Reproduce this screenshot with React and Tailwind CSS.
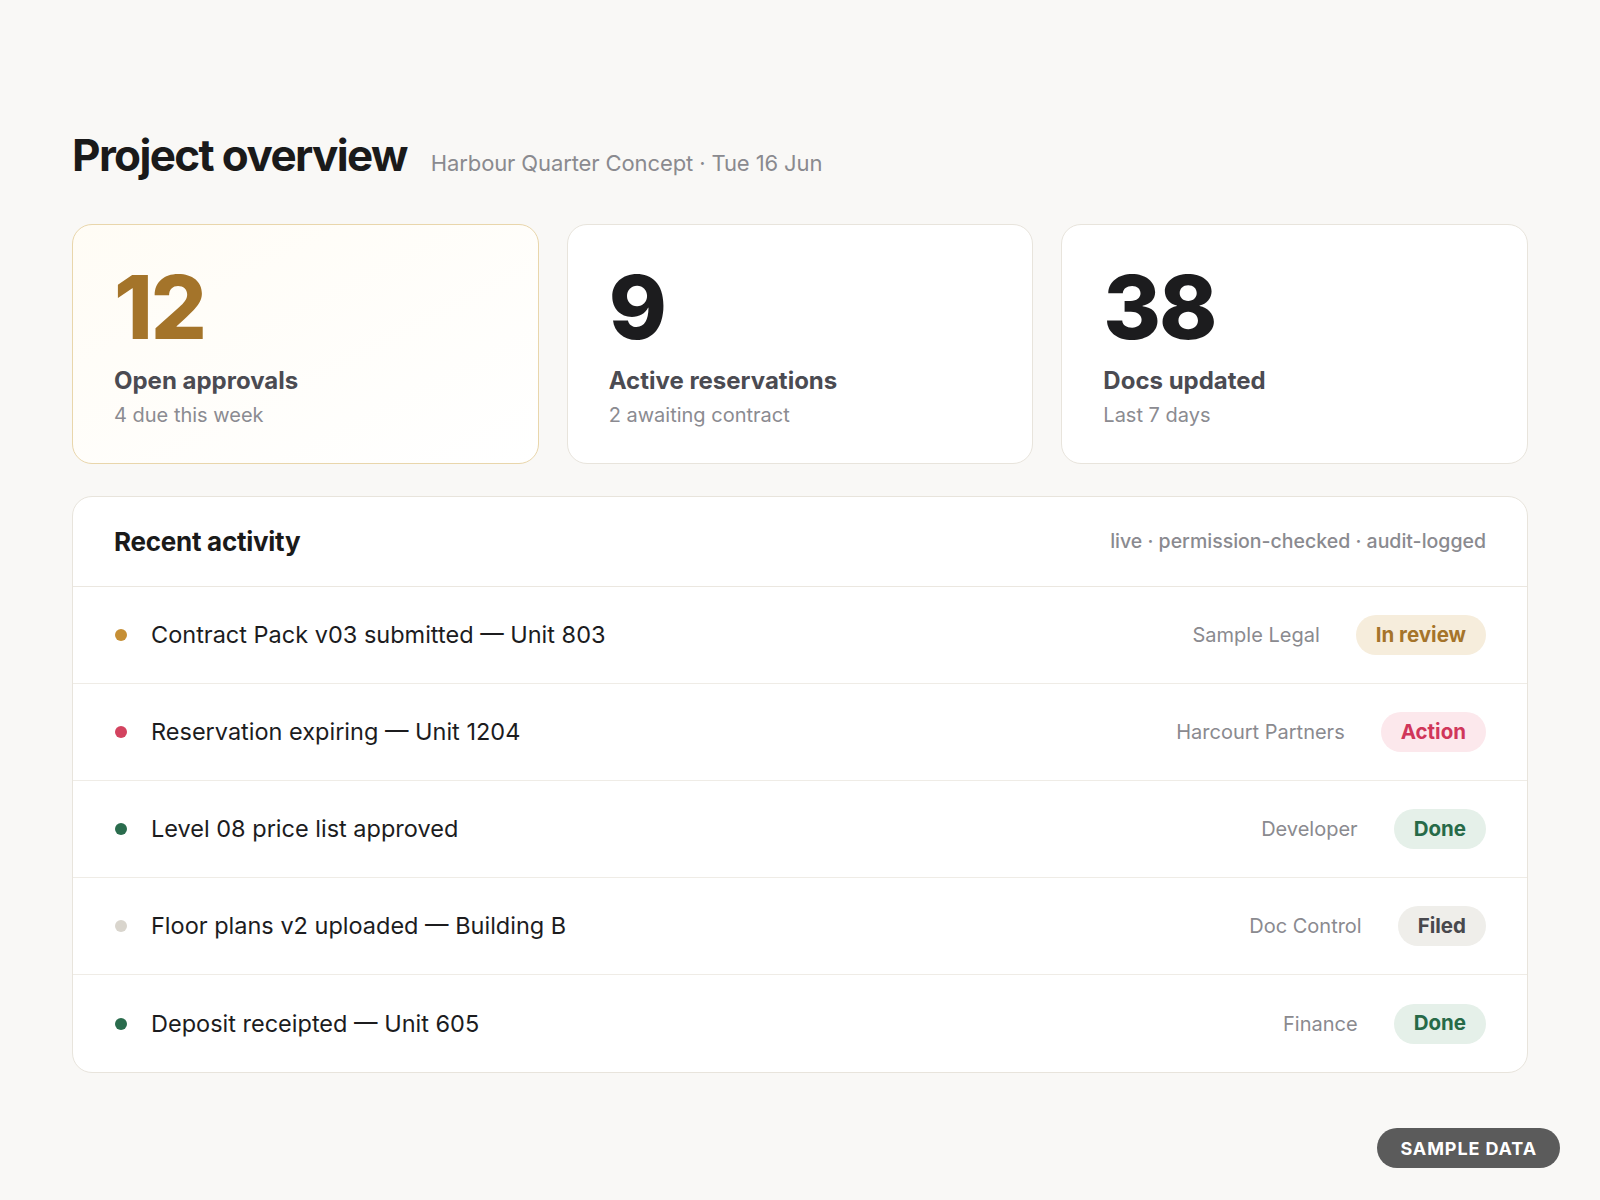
import React from "react";

const STATS = [
  {
    value: "12",
    label: "Open approvals",
    sub: "4 due this week",
    card: "border-[#e9d6ab] bg-gradient-to-br from-[#fffcf5] to-white",
    num: "text-[#a4742a]",
  },
  {
    value: "9",
    label: "Active reservations",
    sub: "2 awaiting contract",
    card: "border-[#e8e4dc] bg-white",
    num: "text-[#1c1c1e]",
  },
  {
    value: "38",
    label: "Docs updated",
    sub: "Last 7 days",
    card: "border-[#e8e4dc] bg-white",
    num: "text-[#1c1c1e]",
  },
];

const BADGES = {
  review: { text: "In review", cls: "bg-[#f6eddc] text-[#a5742a]" },
  action: { text: "Action", cls: "bg-[#fce8ec] text-[#d0365a]" },
  done: { text: "Done", cls: "bg-[#e5f0e9] text-[#276a48]" },
  filed: { text: "Filed", cls: "bg-[#efeeea] text-[#48484d]" },
};

const ACTIVITY = [
  {
    dot: "bg-[#c68f35]",
    title: "Contract Pack v03 submitted — Unit 803",
    who: "Sample Legal",
    badge: "review",
  },
  {
    dot: "bg-[#d3435f]",
    title: "Reservation expiring — Unit 1204",
    who: "Harcourt Partners",
    badge: "action",
  },
  {
    dot: "bg-[#2a6c4d]",
    title: "Level 08 price list approved",
    who: "Developer",
    badge: "done",
  },
  {
    dot: "bg-[#d9d5cd]",
    title: "Floor plans v2 uploaded — Building B",
    who: "Doc Control",
    badge: "filed",
  },
  {
    dot: "bg-[#2a6c4d]",
    title: "Deposit receipted — Unit 605",
    who: "Finance",
    badge: "done",
  },
];

export default function App() {
  return (
    <div className="min-h-screen bg-[#f9f8f6] px-[72px] pt-[133px] pb-[128px] font-['Inter',sans-serif]">
      {/* Header */}
      <div className="flex items-baseline gap-6">
        <h1 className="text-[44px] font-bold leading-none tracking-[-0.037em] text-[#1a1a1a]">
          Project overview
        </h1>
        <p className="text-[22px] leading-none tracking-[-0.005em] text-[#8a8a8f]">
          Harbour Quarter Concept · Tue 16 Jun
        </p>
      </div>

      {/* Stats */}
      <div className="mt-[47px] grid grid-cols-3 gap-7">
        {STATS.map((s, i) => (
          <div
            key={i}
            className={`h-[240px] rounded-[20px] border px-[41px] pt-[38px] ${s.card}`}
          >
            <div
              className={`text-[88px] font-extrabold leading-none tracking-tight ${s.num}`}
            >
              {s.value}
            </div>
            <div className="mt-3.5 text-[24px] font-bold leading-8 text-[#4b4b52]">
              {s.label}
            </div>
            <div className="mt-1 text-[20px] leading-7 text-[#8b8b91]">
              {s.sub}
            </div>
          </div>
        ))}
      </div>

      {/* Recent activity */}
      <div className="mt-8 overflow-hidden rounded-[20px] border border-[#e8e4dc] bg-white">
        <div className="flex h-[90px] items-center justify-between border-b border-[#ebe7e0] px-[41px]">
          <h2 className="text-[26px] font-bold tracking-[-0.01em] text-[#1a1a1a]">
            Recent activity
          </h2>
          <span className="text-[19.5px] font-medium text-[#8a8a8f]">
            live · permission-checked · audit-logged
          </span>
        </div>

        {ACTIVITY.map((a, i) => {
          const b = BADGES[a.badge];
          return (
            <div
              key={i}
              className={`flex h-[97px] items-center px-[41px] ${
                i < ACTIVITY.length - 1 ? "border-b border-[#efece6]" : ""
              }`}
            >
              <span className={`ml-px h-3 w-3 shrink-0 rounded-full ${a.dot}`} />
              <span className="ml-6 text-[23.5px] text-[#1c1c1e]">{a.title}</span>
              <span className="ml-auto text-[20px] text-[#8a8a8f]">{a.who}</span>
              <span
                className={`ml-9 flex h-10 items-center rounded-full px-5 text-[20.5px] font-bold ${b.cls}`}
              >
                {b.text}
              </span>
            </div>
          );
        })}
      </div>

      <div className="fixed bottom-8 right-10 flex h-10 items-center rounded-full bg-[#5b5b5b] px-[23px] text-[18px] font-bold uppercase tracking-wider text-white">
        Sample data
      </div>
    </div>
  );
}
